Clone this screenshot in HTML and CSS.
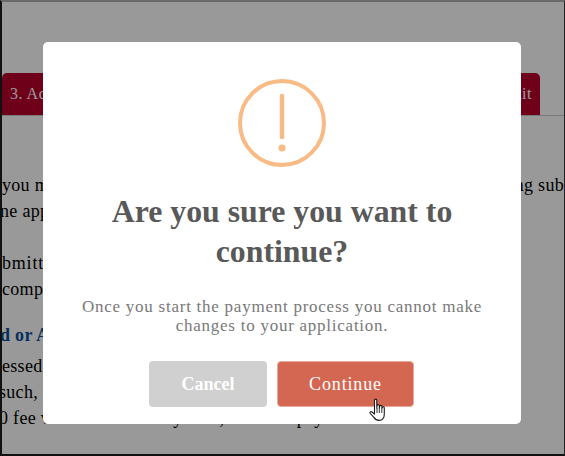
FILE: index.html
```html
<!DOCTYPE html>
<html lang="en">
<head>
<meta charset="utf-8">
<title>Confirm</title>
<link rel="stylesheet" href="styles.css">
</head>
<body>
<div class="frame">
  <div class="page">
    <div class="tabs">
      <div class="tab">3. Additional Information</div>
      <div class="tab tab-end">Submit</div>
    </div>
    <div class="copy">
      <p class="line split"><span>you must review your application before</span><span>ng sub</span></p>
      <p class="line indent-b">ne application and any documents</p>
      <p class="line gap indent-c">bmitted you will receive an email</p>
      <p class="line indent-c">complete your application</p>
      <p class="line heading indent-d">d or Additional Fees</p>
      <p class="line indent-c">essed</p>
      <p class="line indent-e">such, a</p>
      <p class="line indent-f">0 fee will also be due by then, once the payment</p>
    </div>
  </div>
  <div class="overlay">
    <div class="modal">
      <svg class="icon" viewBox="0 0 90 90" width="90" height="90" aria-hidden="true">
        <circle cx="45" cy="45" r="42" fill="none" stroke="#f8bb86" stroke-width="4"/>
        <line x1="45" y1="18" x2="45" y2="59" stroke="#f8bb86" stroke-width="4.500" stroke-linecap="round"/>
        <circle cx="45" cy="70" r="3.600" fill="#f8bb86"/>
      </svg>
      <h1 class="title">Are you sure you want to continue?</h1>
      <p class="text">Once you start the payment process you cannot make changes to your application.</p>
      <div class="actions">
        <button class="btn btn-cancel">Cancel</button>
        <button class="btn btn-confirm">Continue</button>
      </div>
    </div>
    <svg class="cursor" viewBox="0 0 18 25" width="18" height="25" aria-hidden="true">
      <path d="M5.500 2.200c0-1.500 2.300-1.500 2.300 0V10l.2-2.400c.2-1.300 2.200-1.200 2.300.1l.1 2.300.3-1.800c.3-1.200 2.100-1 2.200.2l.1 2 .4-1c.5-1 1.900-.7 1.900.5v6.200c0 3.600-1.800 6.300-5.200 6.300-2.700 0-4-1-5.200-3L1.300 15.500c-.8-1.100.5-2.500 1.700-1.500l2.500 2.200z" fill="#fff" stroke="#1c1c1c" stroke-width="1.100" stroke-linejoin="round"/>
      <path d="M8 10v5M10.300 10v5M12.800 10.500v4.500" fill="none" stroke="#1c1c1c" stroke-width=".9"/>
    </svg>
  </div>
</div>
</body>
</html>
```
FILE: styles.css
```css
* { box-sizing: border-box; }
html, body { margin: 0; padding: 0; background: #fff; }
body { width: 565px; height: 456px; overflow: hidden; }

.frame {
  position: relative;
  width: 565px;
  height: 456px;
  overflow: hidden;
  background: #fff;
  border-style: solid;
  border-color: #6a6a6a #222 #111 #111;
  border-width: 2px 1px 2px 2px;
  font-family: "Liberation Serif", serif;
}

.page { padding-top: 71px; height: 100%; overflow: hidden; }

.tabs {
  display: flex;
  justify-content: space-between;
  height: 43px;
  padding-right: 24px;
  border-bottom: 1px solid #ccc;
}
.tab {
  width: 190px;
  height: 42px;
  padding: 12px 0 0 8px;
  background: #b7002b;
  color: #fff;
  border-radius: 5px 5px 0 0;
  font-size: 16px;
  letter-spacing: .5px;
  white-space: nowrap;
  overflow: hidden;
}
.tab-end {
  width: 90px;
  padding-left: 0;
  text-align: right;
  padding-right: 8px;
}

.copy { padding-top: 56px; font-size: 18px; letter-spacing: .3px; color: #000; }
.line { margin: 0; height: 26px; line-height: 26px; white-space: nowrap; }
.split { display: flex; justify-content: space-between; width: 562px; }
.gap { margin-top: 26px; letter-spacing: .8px; }
.heading { margin-top: 20px; margin-bottom: 5px; color: #0a4f9e; font-weight: bold; }
.indent-b { margin-left: -2px; }
.indent-c { margin-left: 0; }
.indent-d { margin-left: -2px; }
.indent-e { margin-left: -3px; }
.indent-f { margin-left: -3px; }

.overlay {
  position: absolute;
  inset: 0;
  display: flex;
  align-items: center;
  justify-content: center;
  padding-right: 2px;
  background: rgba(0, 0, 0, .4);
}

.modal {
  width: 478px;
  height: 382px;
  margin-top: 10px;
  padding-top: 36px;
  display: flex;
  flex-direction: column;
  align-items: center;
  background: #fff;
  border-radius: 5px;
}

.icon { display: block; flex: none; }

.title {
  width: 400px;
  margin: 24px 0 0;
  font-size: 31.800px;
  line-height: 40px;
  font-weight: bold;
  text-align: center;
  color: #595959;
}

.text {
  width: 430px;
  margin: 25px 0 0;
  font-size: 17px;
  letter-spacing: .75px;
  line-height: 19px;
  text-align: center;
  color: #797979;
}

.actions { display: flex; gap: 10px; margin: 26px 1px 0 0; }

.btn {
  height: 46px;
  padding: 0;
  font-family: "Liberation Serif", serif;
  font-size: 18px;
  font-weight: bold;
  color: #fff;
  border-radius: 4px;
  border: 1px solid transparent;
}
.btn-cancel { width: 118px; background: #d0d0d0; }
.btn-confirm { width: 137px; background: #d46752; border-color: #e8a89b; font-weight: normal; letter-spacing: .85px; }

.cursor { position: absolute; left: 367px; top: 396px; }
```
